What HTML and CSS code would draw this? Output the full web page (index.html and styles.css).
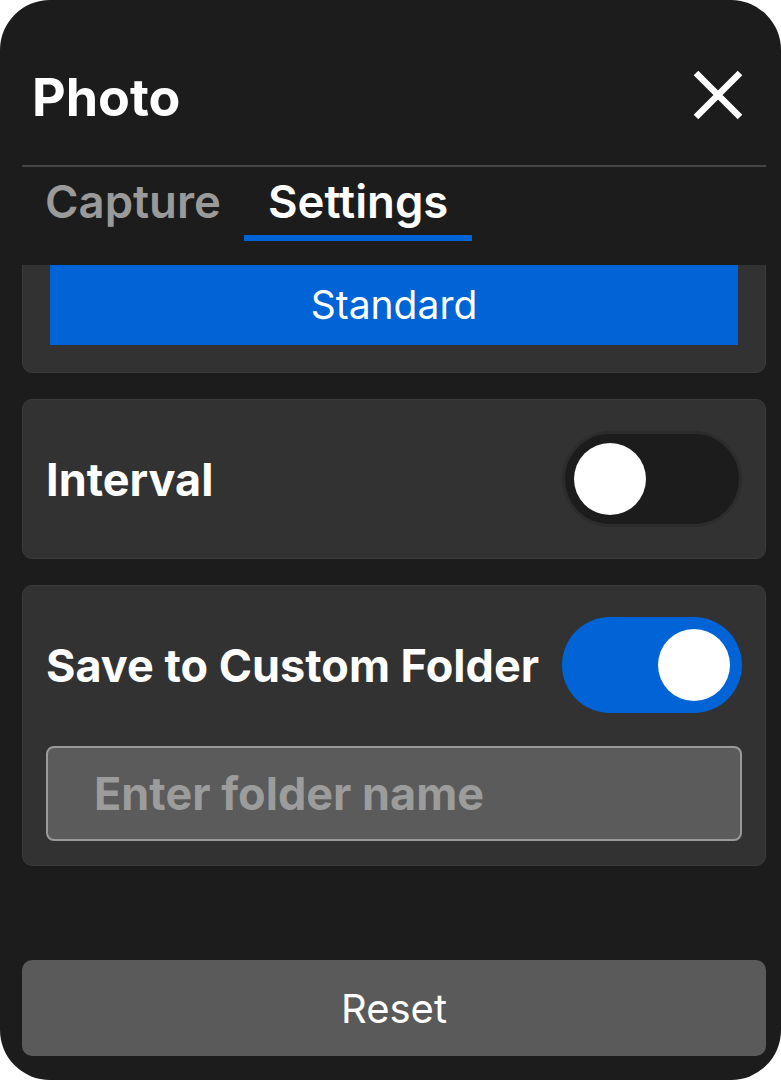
FILE: index.html
```html
<!DOCTYPE html>
<html lang="en">
<head>
<meta charset="utf-8">
<title>Photo</title>
<link rel="stylesheet" href="styles.css">
</head>
<body>
<div class="panel">
  <header class="header">
    <h1 class="title">Photo</h1>
    <button class="close" aria-label="Close">
      <svg width="50" height="50" viewBox="0 0 50 50"><path d="M3 3 L47 47 M47 3 L3 47" stroke="#fff" stroke-width="6.5" fill="none"/></svg>
    </button>
  </header>
  <nav class="tabs">
    <div class="tab">Capture</div>
    <div class="tab active">Settings</div>
  </nav>
  <div class="scroll">
    <div class="list">
      <section class="card card-mode">
        <button class="mode-btn">Standard</button>
      </section>
      <section class="card card-row">
        <span class="label">Interval</span>
        <span class="toggle off"><span class="knob"></span></span>
      </section>
      <section class="card card-folder">
        <div class="row">
          <span class="label">Save to Custom Folder</span>
          <span class="toggle on"><span class="knob"></span></span>
        </div>
        <input class="folder-input" type="text" placeholder="Enter folder name">
      </section>
    </div>
  </div>
  <footer class="footer">
    <button class="reset">Reset</button>
  </footer>
</div>
</body>
</html>
```
FILE: styles.css
```css
* { box-sizing: border-box; }
html, body { margin: 0; padding: 0; background: #ffffff; }
body { font-family: Inter, "Noto Sans", "Liberation Sans", sans-serif; }

.panel {
  width: 781px;
  height: 1080px;
  background: #1c1c1c;
  border-radius: 50px;
  overflow: hidden;
  display: flex;
  flex-direction: column;
}

.header {
  height: 165px;
  padding: 30px 38px 0 32px;
  display: flex;
  align-items: center;
  justify-content: space-between;
  flex: none;
}
.title {
  margin: 0;
  color: #fff;
  font-size: 52px;
  font-weight: 700;
  line-height: 1;
}
.close {
  background: none;
  border: 0;
  padding: 0;
  width: 50px;
  height: 50px;
  margin-top: -5px;
  display: block;
}
.close svg { display: block; }

.tabs {
  flex: none;
  margin: 0 15px 0 22px;
  border-top: 2px solid #444444;
  display: flex;
}
.tab {
  padding: 12px 24px 11px;
  font-size: 45.5px;
  font-weight: 600;
  line-height: 1;
  color: #9a9a9a;
  border-bottom: 6px solid transparent;
  height: 74px;
}
.tab:first-child {
  padding-left: 23px;
  padding-right: 23px;
}
.tab.active {
  color: #ffffff;
  border-bottom-color: #0064d6;
}

.scroll {
  flex: 1;
  overflow: hidden;
  margin-top: 24px;
  padding: 0 15px 0 22px;
}
.list {
  margin-top: -31px;
  display: flex;
  flex-direction: column;
  gap: 26px;
}
.card {
  background: #323232;
  border: 1px solid #3b3b3b;
  border-radius: 10px;
}
.card-mode {
  padding: 28px 27px 27px;
}
.mode-btn {
  display: block;
  width: 100%;
  height: 82px;
  border: 0;
  border-radius: 0;
  background: #0064d6;
  color: #fff;
  font-family: inherit;
  font-size: 39px;
  font-weight: 400;
}
.card-row {
  padding: 31px 23px 31px 23px;
  display: flex;
  align-items: center;
  justify-content: space-between;
}
.label {
  color: #fff;
  font-size: 45px;
  font-weight: 700;
  line-height: 1;
}
.toggle {
  flex: none;
  width: 180px;
  height: 96px;
  border-radius: 48px;
  display: flex;
  align-items: center;
  padding: 0 12px;
}
.toggle .knob {
  width: 72px;
  height: 72px;
  border-radius: 50%;
  background: #fff;
}
.toggle.off {
  background: #1c1c1c;
  border: 3px solid #2c2c2c;
  padding: 0 9px;
}
.toggle.on {
  background: #0064d6;
  justify-content: flex-end;
}

.card-folder {
  padding: 31px 23px 24px 23px;
}
.row {
  display: flex;
  align-items: center;
  justify-content: space-between;
}
.folder-input {
  display: block;
  width: 100%;
  height: 95px;
  margin-top: 33px;
  background: #5b5b5b;
  border: 2px solid #9a9a9a;
  border-radius: 8px;
  padding: 0 0 0 46px;
  font-family: inherit;
  font-size: 45px;
  font-weight: 700;
  color: #fff;
  outline: none;
}
.folder-input::placeholder { color: #9c9c9c; }

.footer {
  flex: none;
  padding: 0 15px 24px 22px;
}
.reset {
  display: block;
  width: 100%;
  height: 96px;
  border: 0;
  border-radius: 10px;
  background: #5a5a5a;
  color: #fff;
  font-family: inherit;
  font-size: 40px;
  font-weight: 400;
}
```
